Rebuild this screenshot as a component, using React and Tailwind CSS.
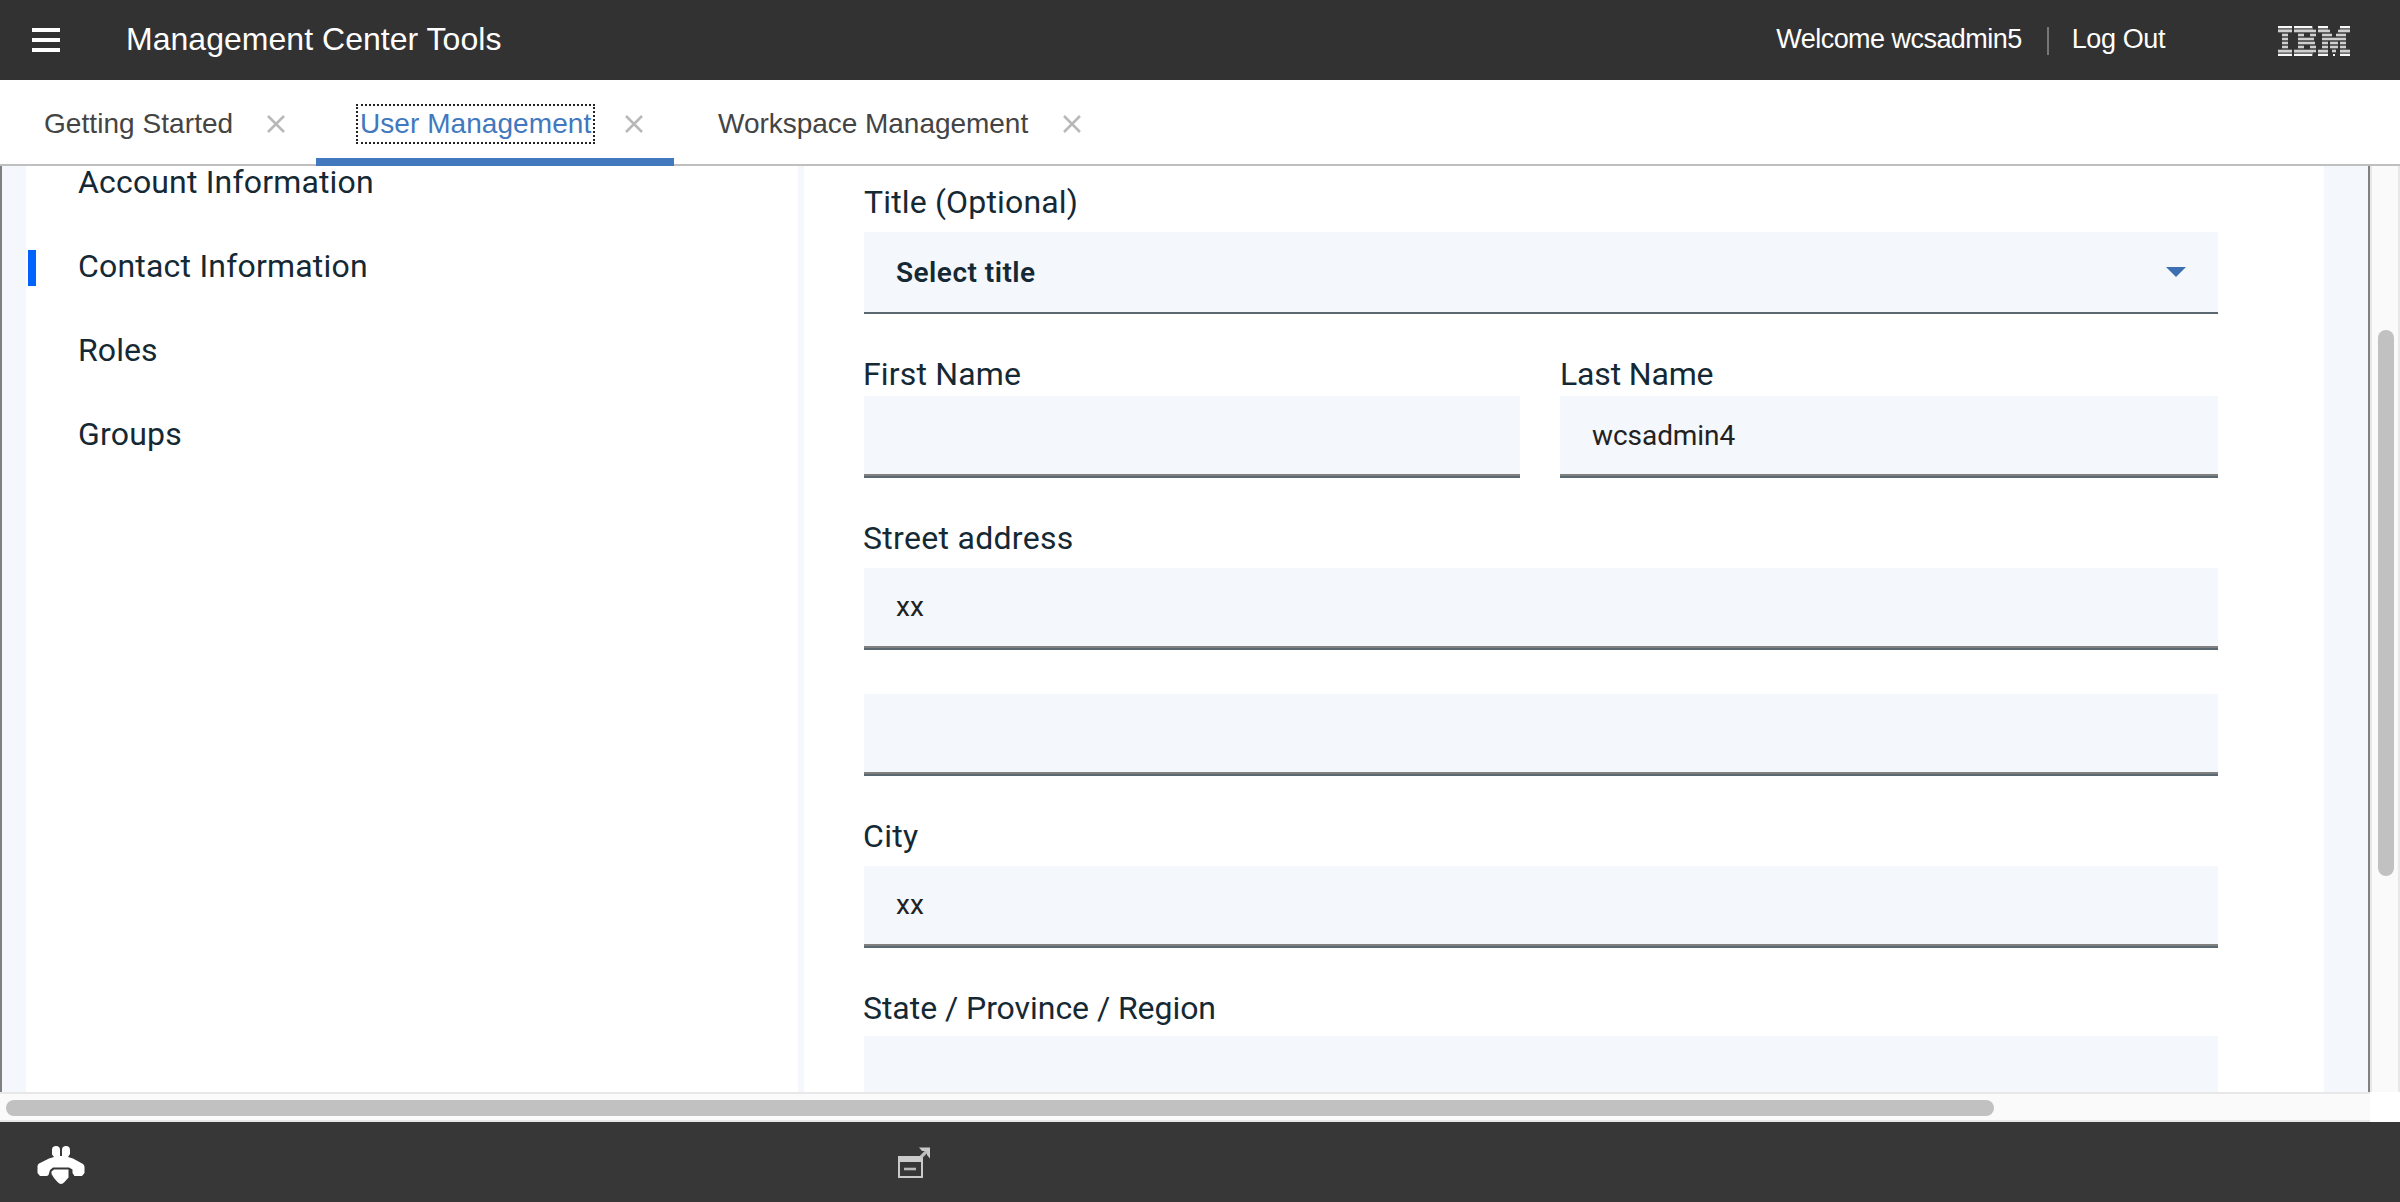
import React from "react";

const TABS = [
  { label: "Getting Started", width: "w-[316px]", text: "pl-[44px] tracking-[0.06px] text-[#444444]" },
  { label: "User Management", width: "w-[358px]", text: "pl-[44px] tracking-[0.06px] text-[#4178be]", active: true },
  { label: "Workspace Management", width: "w-[438px]", text: "pl-[44px] tracking-[-0.03px] text-[#444444]" },
];

const SECTIONS = [
  { label: "Account Information", tracking: "tracking-[0.17px]" },
  { label: "Contact Information", tracking: "tracking-[0.2px]", active: true },
  { label: "Roles", tracking: "tracking-[0.1px]" },
  { label: "Groups", tracking: "tracking-[0.2px]" },
];

function CloseIcon() {
  return (
    <svg className="h-[18px] w-[18px]" viewBox="0 0 18 18" fill="none" stroke="#b8b8b8" strokeWidth="2.500">
      <path d="M1 1L17 17M17 1L1 17" />
    </svg>
  );
}

// Each row lists [x, width] bars of the striped logo; rows are 4px apart.
const LOGO_ROWS = [
  [[1, 14], [17, 18], [41, 10], [63, 10]],
  [[1, 14], [17, 22], [41, 12], [61, 12]],
  [[5, 6], [21, 6], [33, 6], [45, 10], [59, 10]],
  [[5, 6], [21, 16], [45, 24]],
  [[5, 6], [21, 17], [45, 6], [53, 8], [63, 6]],
  [[5, 6], [21, 6], [33, 6], [45, 6], [53, 8], [63, 6]],
  [[1, 14], [17, 22], [41, 10], [55, 4], [63, 10]],
  [[1, 14], [17, 18], [41, 10], [56, 2], [63, 10]],
];

function IbmLogo() {
  return (
    <svg className="h-[30px] w-[74px]" viewBox="0 0 74 30" role="img" aria-label="IBM">
      {[0, 26].map((y) => (
        <path key={y} d={`M1 ${y}h14v4h-14zM17 ${y}h19v4h-19zM41 ${y}h10v4h-10zM63 ${y}h10v4h-10z`} fill="#6f6f6f" />
      ))}
      {LOGO_ROWS.map((row, r) =>
        row.map(([x, w]) => (
          <rect
            key={`${r}-${x}`}
            x={x}
            y={r === 0 || r === 7 ? r * 4 : r * 4 - 0.3}
            width={w}
            height={r === 0 || r === 7 ? 2 : 2.6}
            fill={r === 0 || r === 7 ? "#f8f8f8" : "#cfcfcf"}
          />
        ))
      )}
    </svg>
  );
}

function Label({ children, className }) {
  return <div className={`text-[32px] leading-[40px] text-[#152935] ${className}`}>{children}</div>;
}

function Input({ value, className = "" }) {
  return (
    <div className={`flex h-[82px] shrink-0 flex-col border-b-2 border-[#5a6872] bg-[#f4f7fb] ${className}`}>
      <div className="flex h-20 items-center border-b-2 border-[#808080] pl-8 text-[28px] leading-9 text-[#222222]">
        {value}
      </div>
    </div>
  );
}

export default function App() {
  return (
    <div className="flex h-[1202px] w-[2400px] flex-col overflow-hidden bg-white font-['Liberation_Sans',sans-serif]">
      <header className="flex h-20 shrink-0 items-center bg-[#323232] text-white">
        <svg className="ml-8 h-6 w-7" viewBox="0 0 28 24" fill="#ffffff">
          <path d="M0 0h28v4H0zM0 10h28v4H0zM0 20h28v4H0z" />
        </svg>
        <div className="ml-[66px] text-[32px] leading-[40px] tracking-[0.03px] -mt-[2px]">Management Center Tools</div>
        <div className="ml-auto flex items-center text-[27px] leading-8 -mt-[2px]">
          <span className="whitespace-nowrap tracking-[-0.54px]">Welcome wcsadmin5</span>
          <span className="ml-[25px] mt-[3px] h-7 w-[2px] bg-[#777777]" />
          <span className="ml-[23px] whitespace-nowrap tracking-[-0.4px]">Log Out</span>
        </div>
        <div className="ml-[112px] mr-[49px] mt-[2px]">
          <IbmLogo />
        </div>
      </header>

      <nav className="flex h-[86px] shrink-0 border-b-2 border-[#bfbfbf]">
        {TABS.map((t) => (
          <div
            key={t.label}
            className={`-mb-[2px] flex items-center justify-between pr-[31px] ${t.width} ${t.text} ${
              t.active ? "border-b-8 border-[#4178be] pt-[10px]" : "pt-[2px]"
            }`}
          >
            <span
              className={`whitespace-nowrap text-[28px] leading-9 ${
                t.active ? "-mx-[4px] -my-[2px] border-2 border-dotted border-[#222222] px-[2px]" : ""
              }`}
            >
              {t.label}
            </span>
            <CloseIcon />
          </div>
        ))}
      </nav>

      <div className="flex h-[926px] shrink-0">
        <main className="flex w-[2370px] overflow-hidden border-x-2 border-[#808080] bg-[#f4f7fb] pl-6 pr-11 font-['Roboto',sans-serif]">
          <aside className="w-[772px] shrink-0 bg-white">
            <ul className="-mt-[25px]">
              {SECTIONS.map((s) => (
                <li key={s.label} className="flex h-[84px] items-center pl-[2px]">
                  <span className={`mt-[2px] h-9 w-2 ${s.active ? "bg-[#0062ff]" : ""}`} />
                  <span className={`ml-[42px] -mt-[2px] text-[32px] leading-[34px] text-[#152935] ${s.tracking}`}>
                    {s.label}
                  </span>
                </li>
              ))}
            </ul>
          </aside>
          <section className="ml-[6px] flex w-[1520px] shrink-0 flex-col bg-white pl-[60px] pr-[106px]">
            <Label className="mt-[16px] mb-[10px] tracking-[0.16px]">Title (Optional)</Label>
            <div className="flex h-[82px] shrink-0 items-center justify-between border-b-2 border-[#5a6872] bg-[#f4f7fb] pl-8 pr-8">
              <span className="mt-[2px] text-[28px] font-semibold leading-9 tracking-[0.48px] text-[#152935]">
                Select title
              </span>
              <svg className="h-[10px] w-5" viewBox="0 0 20 10" fill="#3d70b2">
                <path d="M0 0h20L10 10z" />
              </svg>
            </div>
            <div className="mt-[40px] flex gap-10">
              <div className="w-[656px]">
                <Label className="mb-[2px] -ml-px tracking-[0.16px]">First Name</Label>
                <Input />
              </div>
              <div className="w-[658px]">
                <Label className="mb-[2px] tracking-[-0.16px]">Last Name</Label>
                <Input value={<span className="mt-[2px] tracking-[-0.06px]">wcsadmin4</span>} />
              </div>
            </div>
            <Label className="mt-[40px] mb-[10px] -ml-px tracking-[0.3px]">Street address</Label>
            <Input value="xx" />
            <Input className="mt-11" />
            <Label className="mt-[40px] mb-[10px] -ml-px tracking-[0.3px]">City</Label>
            <Input value="xx" />
            <Label className="mt-[40px] mb-[8px] -ml-px tracking-[-0.05px]">State / Province / Region</Label>
            <Input />
          </section>
        </main>
        <div className="w-[30px] border-x-2 border-[#e8e8e8] bg-[#fafafa] px-[6px] pt-[164px]">
          <div className="h-[546px] w-4 rounded-full bg-[#c1c1c1]" />
        </div>
      </div>

      <div className="h-[30px] w-[2370px] shrink-0 border-y-2 border-[#e8e8e8] bg-[#fafafa] pl-[6px] pt-[6px]">
        <div className="h-4 w-[1988px] rounded-full bg-[#c1c1c1]" />
      </div>

      <footer className="flex h-20 shrink-0 items-start bg-[#373737]">
        <svg className="ml-9 mt-[22px] h-[42px] w-[50px]" viewBox="0 0 50 42" fill="#ffffff">
          <path d="M16 6C16 3 17.500 2 20 2S24 3 24 6V12H26V6C26 3 27.500 2 30 2S34 3.500 34 6V10L32 13L37 14.500L47 20Q48.500 21 48.500 23V29L46 32H38.500L36.500 29V25.500L33 23.500H17L14 26L12.500 31L11 32H4L1.500 29V22.500Q1.500 20.500 3 19.500L13 14.500L18 13L16 10.500Z" />
          <path d="M18 25.500H32.500V33.500L28.500 38Q25 42 21.500 38L18 34L15.500 30V27.500Z" />
        </svg>
        <svg className="ml-[812px] mt-[24px] h-[34px] w-[34px]" viewBox="0 0 34 34" fill="none">
          <path d="M1 11H24V31H1Z" stroke="#c9c9c9" strokeWidth="2" />
          <path d="M0 10H24V16H0Z" fill="#cbcbcb" />
          <path d="M6 23H18" stroke="#b8b8b8" strokeWidth="2.600" />
          <path d="M23 11L30 4" stroke="#bdbdbd" strokeWidth="3.200" />
          <path d="M21 1.500H32V12.500L29 9V5H24Z" fill="#c9c9c9" />
        </svg>
      </footer>
    </div>
  );
}
